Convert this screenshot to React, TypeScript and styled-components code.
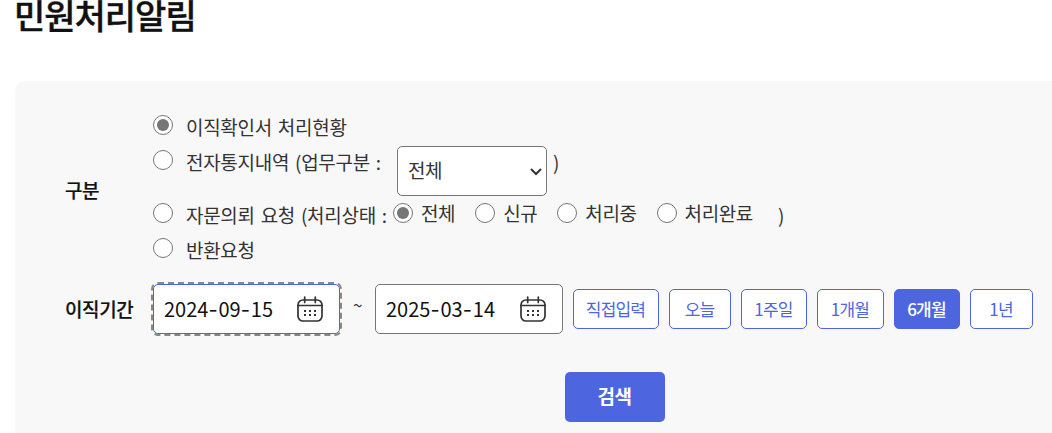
import React, {useState} from 'react';
import styled, {createGlobalStyle} from 'styled-components';

const GlobalStyle = createGlobalStyle`
  * {
    box-sizing: border-box;
  }

  body {
    margin: 0;
    overflow: hidden;
    background-color: #fff;
    color: #333;
    font-family: "Noto Sans CJK KR", sans-serif;
    font-size: 19px;
    letter-spacing: -0.4px;
  }
`;

const Page = styled.main`
  width: 1080px;
  height: 433px;
  padding-left: 15px;
  overflow: hidden;
`;

const Title = styled.h1`
  height: 81px;
  margin: 0 0 0 -1px;
  color: #111;
  font-size: 34px;
  font-weight: 500;
  line-height: 30px;
  letter-spacing: -1px;
  white-space: nowrap;
  -webkit-text-stroke: 0.4px #111;
`;

const SearchPanel = styled.form`
  height: 380px;
  padding: 34px 0 0 50px;
  border-radius: 10px;
  background-color: #f8f8f8;
`;

const FieldRow = styled.div<{$height: number}>`
  display: flex;
  align-items: center;
  height: ${props => props.$height}px;
`;

const FieldName = styled.div`
  flex: none;
  width: 88px;
  padding-bottom: 2px;
  color: #111;
  font-weight: 500;
  white-space: nowrap;
  -webkit-text-stroke: 0.2px #111;
`;

const OptionList = styled.div`
  flex: 1;
  height: 100%;
`;

const OptionRow = styled.div<{$height: number}>`
  display: flex;
  align-items: flex-start;
  height: ${props => props.$height}px;
`;

const Radio = styled.input.attrs({type: 'radio'})`
  flex: none;
  width: 20px;
  height: 20px;
  margin: 0;
  accent-color: #767676;
`;

const OptionText = styled.label<{$width?: number}>`
  flex: none;
  width: ${props => props.$width ? `${props.$width}px` : 'auto'};
  margin: 2px 0 0 13px;
  line-height: 20px;
  letter-spacing: -0.3px;
  word-spacing: 2px;
  white-space: pre;
`;

const StateText = styled.label`
  margin: 0 20px 0 8px;
  line-height: 19px;
  white-space: nowrap;
`;

const ClosingBracket = styled.span<{$gap: number}>`
  margin: 2px 0 0 ${props => props.$gap}px;
  line-height: 20px;
`;

const SelectWrap = styled.div`
  position: relative;
  height: 50px;
  margin-top: -4px;

  svg {
    position: absolute;
    top: 21px;
    right: 5px;
    pointer-events: none;
  }
`;

const TaskSelect = styled.select`
  display: block;
  width: 150px;
  height: 50px;
  padding: 0 20px 3px 10px;
  border: 1px solid #767676;
  border-radius: 5px;
  appearance: none;
  background-color: #fff;
  color: #333;
  font: inherit;
  letter-spacing: inherit;
`;

const DateBox = styled.div<{$focused?: boolean}>`
  flex: none;
  display: flex;
  align-items: center;
  justify-content: space-between;
  width: ${props => props.$focused ? 187 : 188}px;
  height: 50px;
  padding: 0 16px 0 10px;
  border: 1px solid ${props => props.$focused ? '#4d66e0' : '#767676'};
  border-radius: 5px;
  outline: ${props => props.$focused ? '2px dashed #888' : 'none'};
  background-color: #fff;
  color: #111;
`;

const DateText = styled.span`
  padding-bottom: 2px;
  font-size: 20px;
  letter-spacing: 0;
  white-space: nowrap;
`;

const Dash = styled.span`
  font-family: Inter, sans-serif;
  letter-spacing: 0.9px;
`;

const Tilde = styled.span`
  width: 35px;
  margin-top: -9px;
  font-size: 17px;
  text-align: center;
`;

const PeriodButtons = styled.div`
  display: flex;
  gap: 10px;
  margin-left: 10px;
`;

const PeriodButton = styled.button<{$width: number; $active: boolean}>`
  width: ${props => props.$width}px;
  height: 40px;
  padding: 0 1px 2px 0;
  border: 1px solid #4d66e0;
  border-radius: 5px;
  background-color: ${props => props.$active ? '#4d66e0' : '#fff'};
  color: ${props => props.$active ? '#fff' : '#4d66e0'};
  font-family: inherit;
  font-size: 17px;
  font-weight: ${props => props.$active ? 500 : 400};
  letter-spacing: -0.8px;
  white-space: nowrap;
`;

const SearchButton = styled.button`
  display: block;
  width: 100px;
  height: 50px;
  margin: 19px 0 0 500px;
  padding: 0 1px 3px 0;
  border: 0;
  border-radius: 5px;
  background-color: #4d66e0;
  color: #fff;
  font-family: inherit;
  font-size: 19px;
  font-weight: 700;
  letter-spacing: -0.4px;
`;

const CalendarIcon = () => (
  <svg width="26" height="26" viewBox="0 0 26 26" fill="none" stroke="#333" strokeWidth="1.7">
    <rect x="1" y="4" width="24" height="21" rx="5"/>
    <path d="M1 9.5h24M7.7 1v5.5M18.3 1v5.5" strokeLinecap="round"/>
    <path d="M7 15h2M12 15h2M17 15h2M7 19h2M12 19h2M17 19h2" strokeWidth="2"/>
  </svg>
);

const ArrowIcon = () => (
  <svg width="12" height="9" viewBox="0 0 12 9" fill="none" stroke="#333" strokeWidth="2">
    <path d="M1 2l5 5 5-5"/>
  </svg>
);

const DateValue = ({value}: {value: string}) => (
  <DateText>
    {value.split('-').map((part, i) => (
      <React.Fragment key={i}>
        {i > 0 ? <Dash>-</Dash> : null}
        {part}
      </React.Fragment>
    ))}
  </DateText>
);

const STATES = ['전체', '신규', '처리중', '처리완료'];

const PERIODS = [
  {label: '직접입력', width: 86},
  {label: '오늘', width: 62},
  {label: '1주일', width: 66},
  {label: '1개월', width: 67},
  {label: '6개월', width: 66},
  {label: '1년', width: 63}
];

export default function App() {
  const [kind, setKind] = useState(0);
  const [state, setState] = useState('전체');
  const [period, setPeriod] = useState('6개월');

  const kindRadio = (index: number) => (
    <Radio id={`kind${index}`} name="kind" checked={kind === index} onChange={() => setKind(index)}/>
  );

  return (
    <Page>
      <GlobalStyle/>
      <Title>민원처리알림</Title>
      <SearchPanel onSubmit={e => e.preventDefault()}>
        <FieldRow $height={150}>
          <FieldName>구분</FieldName>
          <OptionList>
            <OptionRow $height={35}>
              {kindRadio(0)}
              <OptionText htmlFor="kind0">이직확인서 처리현황</OptionText>
            </OptionRow>
            <OptionRow $height={53}>
              {kindRadio(1)}
              <OptionText htmlFor="kind1" $width={211}>전자통지내역 (업무구분 :</OptionText>
              <SelectWrap>
                <TaskSelect>
                  <option>전체</option>
                </TaskSelect>
                <ArrowIcon/>
              </SelectWrap>
              <ClosingBracket $gap={6}>)</ClosingBracket>
            </OptionRow>
            <OptionRow $height={35}>
              {kindRadio(2)}
              <OptionText htmlFor="kind2" $width={207}>자문의뢰 요청 (처리상태 :</OptionText>
              {STATES.map(s => (
                <React.Fragment key={s}>
                  <Radio id={s} name="state" checked={state === s} onChange={() => setState(s)}/>
                  <StateText htmlFor={s}>{s}</StateText>
                </React.Fragment>
              ))}
              <ClosingBracket $gap={5}>)</ClosingBracket>
            </OptionRow>
            <OptionRow $height={27}>
              {kindRadio(3)}
              <OptionText htmlFor="kind3">반환요청</OptionText>
            </OptionRow>
          </OptionList>
        </FieldRow>
        <FieldRow $height={88}>
          <FieldName>이직기간</FieldName>
          <DateBox $focused>
            <DateValue value="2024-09-15"/>
            <CalendarIcon/>
          </DateBox>
          <Tilde>~</Tilde>
          <DateBox>
            <DateValue value="2025-03-14"/>
            <CalendarIcon/>
          </DateBox>
          <PeriodButtons>
            {PERIODS.map(p => (
              <PeriodButton
                key={p.label}
                type="button"
                $width={p.width}
                $active={period === p.label}
                onClick={() => setPeriod(p.label)}
              >
                {p.label}
              </PeriodButton>
            ))}
          </PeriodButtons>
        </FieldRow>
        <SearchButton>검색</SearchButton>
      </SearchPanel>
    </Page>
  );
}
